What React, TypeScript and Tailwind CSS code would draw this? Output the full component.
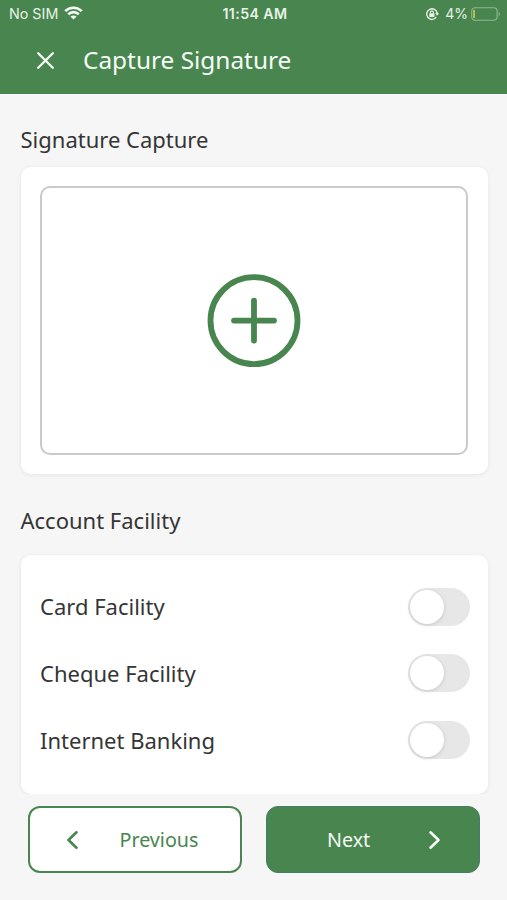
import React, { useState } from 'react';

interface ToggleProps {
  label: string;
  checked: boolean;
  onChange: () => void;
}

const StatusBar: React.FC = () => {
  return (
    <div className="grid h-[28px] grid-cols-[1fr_auto_1fr] items-center pl-[9px] pr-[6px] font-['Inter',sans-serif] text-[14px] leading-none text-[#e6f3e6]">
      <div className="flex items-center gap-[6px]">
        <span className="text-[14.3px]">No SIM</span>
        <svg width="19" height="14" viewBox="0 0 19 14" fill="none" stroke="#f4fbf4" strokeWidth="2.6" className="-mt-[2px]">
          <path d="M1.2 5.2C5.8 .6 13.2 .6 17.8 5.2" />
          <path d="M4.2 8.3C7.2 5.4 11.8 5.4 14.8 8.3" />
          <path d="M9.5 13.6L6.4 10.5C8.2 9 10.8 9 12.6 10.5Z" fill="#f4fbf4" stroke="none" />
        </svg>
      </div>
      <span className="pt-[1px] text-[14.2px] font-semibold tracking-[0.4px]">11:54 AM</span>
      <div className="flex items-center justify-end">
        <svg width="14" height="14" viewBox="0 0 14 14" fill="none" stroke="#e6f3e6" className="mr-[6px]">
          <path d="M11.3 10.2A5.3 5.3 0 1 1 12.2 6.2" strokeWidth="1.4" />
          <path d="M10.2 6L14 6L12.1 8.8Z" fill="#e6f3e6" stroke="none" />
          <rect x="4.3" y="6.2" width="5.2" height="3.9" rx=".6" fill="#e6f3e6" stroke="none" />
          <path d="M5.4 6.5V5.4a1.5 1.5 0 0 1 3 0V6.5" strokeWidth="1.1" />
        </svg>
        <span className="mr-[3px]">4%</span>
        <svg width="30" height="14" viewBox="0 0 30 14" fill="none" className="-mt-[1px]">
          <rect x=".7" y=".7" width="25.4" height="12.6" rx="3.5" stroke="#8fb894" strokeWidth="1.1" />
          <rect x="2" y="2.8" width="2" height="8.4" rx="1" fill="#b9c04a" />
          <path d="M27.7 5v4.2c1.7-.7 1.7-3.5 0-4.2z" fill="#8fb894" />
        </svg>
      </div>
    </div>
  );
};

const ToggleRow: React.FC<ToggleProps> = ({ label, checked, onChange }) => {
  return (
    <div className="flex h-[66.7px] items-center justify-between">
      <span>{label}</span>
      <button
        role="switch"
        aria-checked={checked}
        aria-label={label}
        onClick={onChange}
        className={`flex h-[38px] w-[62px] items-center rounded-full px-[2px] ${
          checked ? 'justify-end bg-[#49854f]' : 'bg-[#e7e7e7]'
        }`}
      >
        <span className="size-[34px] rounded-full bg-white shadow-[0_1px_4px_rgba(0,0,0,0.14)]" />
      </button>
    </div>
  );
};

const facilities = ['Card Facility', 'Cheque Facility', 'Internet Banking'];

export default function App() {
  const [enabled, setEnabled] = useState<string[]>([]);

  const toggle = (name: string) => {
    setEnabled((prev) => (prev.includes(name) ? prev.filter((n) => n !== name) : [...prev, name]));
  };

  return (
    <div className="flex h-[900px] w-[507px] flex-col overflow-hidden bg-[#f6f6f6] font-['Noto_Sans',sans-serif] text-[22px] text-[#353535]">
      <header className="h-[94px] shrink-0 bg-[#49854f]">
        <StatusBar />
        <div className="flex h-[64px] items-center pl-[37px] text-[#f6fcf6]">
          <button aria-label="Close" className="mr-[29px]">
            <svg width="17" height="17" viewBox="0 0 17 17" fill="none" stroke="currentColor" strokeWidth="2.3" strokeLinecap="round">
              <path d="M1.2 1.2l14.6 14.6M15.8 1.2L1.2 15.8" />
            </svg>
          </button>
          <h1 className="text-[24.4px]">Capture Signature</h1>
        </div>
      </header>

      <main className="h-[700px] shrink-0 overflow-hidden pl-[20.5px] pr-[19.5px] pt-[29px]">
        <h2 className="h-[44px] leading-[32px]">Signature Capture</h2>
        <div className="h-[307px] rounded-[10px] bg-white px-[19.5px] pt-[19px] shadow-[0_1px_5px_rgba(0,0,0,0.07)]">
          <button
            aria-label="Add signature"
            className="flex h-[269px] w-full items-center justify-center rounded-[10px] border-2 border-[#cacaca]"
          >
            <svg width="94" height="94" viewBox="0 0 94 94" fill="none" stroke="#49854f" strokeWidth="5.8" strokeLinecap="round">
              <circle cx="47" cy="46.6" r="43.5" />
              <path d="M47 26.6v40M27 46.6h40" />
            </svg>
          </button>
        </div>

        <h2 className="mt-[30px] h-[51px] leading-[32px]">Account Facility</h2>
        <div className="h-[239px] rounded-[10px] bg-white pl-[19.5px] pr-[17.5px] pt-[18.4px] shadow-[0_1px_5px_rgba(0,0,0,0.07)]">
          {facilities.map((name) => (
            <ToggleRow key={name} label={name} checked={enabled.includes(name)} onChange={() => toggle(name)} />
          ))}
        </div>
      </main>

      <footer className="flex gap-[24px] pl-[28px] pr-[27px] pt-[12px] text-[19.7px]">
        <button className="flex h-[67px] w-[214px] items-center rounded-[12px] border-2 border-[#49854f] bg-white pl-[37px] text-[#49854f]">
          <svg width="11" height="18" viewBox="0 0 11 18" fill="none" stroke="currentColor" strokeWidth="2.6" strokeLinecap="round" strokeLinejoin="round">
            <path d="M9.5 1.3L1.5 9l8 7.7" />
          </svg>
          <span className="ml-[41.5px]">Previous</span>
        </button>
        <button className="flex h-[67px] w-[214px] items-center justify-between rounded-[12px] border border-[#437e68] bg-[#49854f] pl-[60px] pr-[39px] text-[#f6fcf6]">
          <span>Next</span>
          <svg width="11" height="18" viewBox="0 0 11 18" fill="none" stroke="currentColor" strokeWidth="2.6" strokeLinecap="round" strokeLinejoin="round">
            <path d="M1.5 1.3l8 7.7-8 7.7" />
          </svg>
        </button>
      </footer>
    </div>
  );
}
